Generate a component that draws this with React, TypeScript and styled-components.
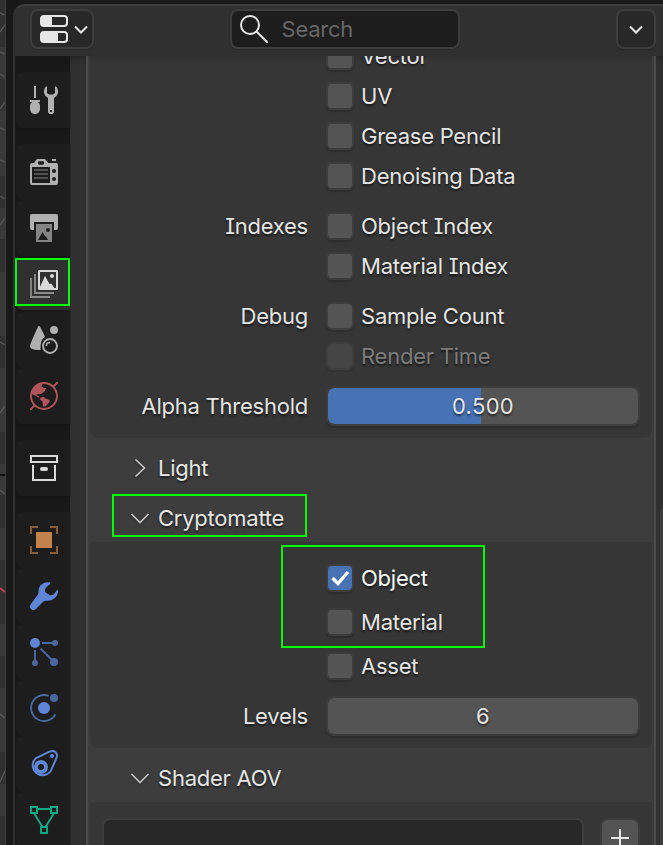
import React from "react";
import styled, { createGlobalStyle, css } from "styled-components";

const GlobalStyle = createGlobalStyle`
  * { box-sizing: border-box; }
  html, body { margin: 0; padding: 0; background: #181818; overflow: hidden; }
`;

const Screen = styled.div`
  position: relative;
  display: flex;
  width: 663px;
  height: 845px;
  overflow: hidden;
  background: #181818;
  color: #e6e6e6;
  font-family: Inter, "Liberation Sans", sans-serif;
  font-size: 22px;
  line-height: 30px;
  letter-spacing: -0.24px;
  font-feature-settings: "cv08" 1;
  text-shadow: 0 2px 2px rgba(0, 0, 0, 0.55);
`;

const Viewport = styled.div`
  flex: none;
  width: 6px;
  height: 845px;
  background: #303030;
  border-right: 1px solid #3c3c3c;
  svg { display: block; }
`;

const Editor = styled.div`
  flex: none;
  display: flex;
  flex-direction: column;
  width: 660px;
  height: 850px;
  margin: 4px 0 0 7px;
  border: 2px solid #3d3d3d;
  border-left-color: #303030;
  border-radius: 12px 0 0 0;
  overflow: hidden;
  background: #303030;
`;

const Header = styled.header`
  flex: none;
  display: flex;
  align-items: flex-start;
  justify-content: space-between;
  width: 641px;
  height: 50px;
  padding: 3px 0 0 15px;
`;

const control = css`
  display: flex;
  align-items: center;
  height: 40px;
  border: 2px solid #3d3d3d;
  border-radius: 8px;
  box-shadow: 0 1px 1px rgba(0, 0, 0, 0.2);
`;

const EditorType = styled.div`
  ${control}
  width: 64px;
  padding-left: 8px;
  gap: 6px;
  background: #282828;
`;

const SearchField = styled.div`
  ${control}
  width: 230px;
  margin-left: -42px;
  margin-right: -21px;
  padding-left: 8px;
  gap: 14px;
  background: #1d1d1d;
  color: #666;
  text-shadow: none;
`;

const OptionsButton = styled.div`
  ${control}
  width: 40px;
  justify-content: center;
  background: #282828;
`;

const Main = styled.div`
  flex: 1;
  display: flex;
  min-height: 0;
`;

const Tabs = styled.nav`
  flex: none;
  width: 55px;
  padding: 16px 0 0 1px;
  background: #181818;
`;

const TabGroup = styled.div`
  margin-bottom: 16px;
  box-shadow: 0 1px 1px #141414;
`;

const Tab = styled.div<{ $active?: boolean }>`
  display: flex;
  align-items: center;
  justify-content: center;
  height: 56px;
  padding-left: 2px;
  border: solid transparent;
  border-width: ${(p) => (p.$active ? "2px 0" : "0")};
  border-radius: 8px 0 0 8px;
  background: ${(p) => (p.$active ? "#303030" : "#1d1d1d")};
  background-clip: padding-box;
`;

const Region = styled.main`
  flex: none;
  width: 593px;
  padding-left: 16px;
  box-shadow: inset 0 6px 6px -4px rgba(0, 0, 0, 0.3);
`;

const Panel = styled.section`
  width: 570px;
  height: 100%;
  border: solid #4b4b4b;
  border-width: 0 2px;
  padding: 0 2px;
  background: #3d3d3d;
`;

const SubBody = styled.div<{ $height: number; $first?: boolean }>`
  position: relative;
  height: ${(p) => p.$height}px;
  overflow: hidden;
  border-radius: 0 0 8px 8px;
  background: ${(p) =>
    p.$first ? "linear-gradient(#303030, #363636 7px)" : "#363636"};
`;

const Rows = styled.div<{ $top: number }>`
  display: flex;
  flex-direction: column;
  margin-top: ${(p) => p.$top}px;
`;

const Row = styled.div<{ $height?: number; $gap?: number; $muted?: boolean; $bright?: boolean }>`
  display: flex;
  align-items: center;
  height: ${(p) => p.$height ?? 40}px;
  margin-top: ${(p) => p.$gap ?? 0}px;
  color: ${(p) => (p.$muted ? "#7c7c7c" : p.$bright ? "#fff" : "#e6e6e6")};
`;

const Label = styled.span`
  flex: none;
  width: 218px;
  margin-right: 18px;
  text-align: right;
  white-space: nowrap;
`;

const Box = styled.span<{ $on?: boolean; $muted?: boolean }>`
  flex: none;
  display: flex;
  align-items: center;
  justify-content: center;
  width: 28px;
  height: 28px;
  margin-right: 7px;
  border: 2px solid #3d3d3d;
  border-radius: 6px;
  background: ${(p) => (p.$on ? "#4772b3" : p.$muted ? "#454545" : "#545454")};
  box-shadow: 0 2px 1px ${(p) => (p.$muted ? "#323232" : "#2e2e2e")};
`;

const NumberField = styled.div<{ $fill?: number }>`
  flex: none;
  width: 314px;
  height: 40px;
  border: 2px solid #3d3d3d;
  border-radius: 8px;
  background: ${(p) =>
    p.$fill ? `linear-gradient(90deg, #4772b3 ${p.$fill}%, #545454 ${p.$fill}%)` : "#545454"};
  background-clip: padding-box;
  box-shadow: 0 2px 1px #2e2e2e;
  text-align: center;
  letter-spacing: 0.35px;
  line-height: 37px;
`;

const SubHeader = styled.div<{ $height: number; $top: number }>`
  display: flex;
  align-items: center;
  gap: 10px;
  height: ${(p) => p.$height}px;
  padding: ${(p) => p.$top}px 0 0 40px;
  svg { filter: drop-shadow(0 1px 1px rgba(0, 0, 0, 0.4)); }
`;

const AovBody = styled.div`
  display: flex;
  height: 60px;
  padding: 16px 0 0 12px;
  gap: 16px;
  background: #363636;
`;

const AovList = styled.div`
  width: 482px;
  height: 60px;
  border: 2px solid #3d3d3d;
  border-radius: 8px;
  background: #282828;
`;

const AddButton = styled.div`
  display: flex;
  align-items: center;
  justify-content: center;
  width: 40px;
  height: 40px;
  border: 2px solid #3d3d3d;
  border-radius: 8px;
  background: #545454;
`;

const Scrollbar = styled.div`
  position: absolute;
  left: 660px;
  top: 508px;
  width: 6px;
  height: 340px;
  border-radius: 4px 0 0 0;
  background: #3d3d3d;
`;

const Highlight = styled.div<{ $x: number; $y: number; $w: number; $h: number }>`
  position: absolute;
  left: ${(p) => p.$x}px;
  top: ${(p) => p.$y}px;
  width: ${(p) => p.$w}px;
  height: ${(p) => p.$h}px;
  border: 2px solid #00ff00;
`;

const Icon = ({ children }: { children: React.ReactNode }) => (
  <svg width="28" height="28" viewBox="0 0 28 28" fill="none">
    {children}
  </svg>
);

const G = "#b0b0b0";
const D = "#1d1d1d";
const B = "#5f86d6";
const BD = "#4a679f";

const ToolIcon = () => (
  <Icon>
    <path d="M4 0h2v12H4z" fill={G} />
    <path d="M0 14h10v2H8q2 1.500 2 4v3.500Q9 28 5 28t-5-4.500V20q0-2.500 2-4H0z" fill={G} />
    <path fillRule="evenodd" fill={G} d="M17 0v7l2 1.500h4L25 7V0l2 1.500 1 3V7l-1.500 3L24 12v14.500L22.500 28h-3L18 26.500V12l-2.500-2L14 7V4.500l1-3zM20 24v2h2v-2z" />
  </Icon>
);
const RenderIcon = () => (
  <Icon>
    <path fillRule="evenodd" fill={G} d="M2 5h2l2-3q.6-1 2-1h6q1.400 0 2 1l2 3h8q2 0 2 2v18q0 2-2 2H2q-2 0-2-2V7q0-2 2-2zM9 3.200q-1 0-1 1v1.600q0 1 1 1h4q1 0 1-1V4.200q0-1-1-1z" />
    <path fill={G} d="M22 1h4v2h-4z" />
    <path fill={D} d="M2 9h18v16H2z" />
    <path d="M4 12h14M4 16h14M4 20h14" stroke="#505050" strokeWidth="2" />
    <circle cx="24" cy="13" r="2" fill={D} />
    <circle cx="24" cy="21" r="2" fill={D} />
  </Icon>
);
const OutputIcon = () => (
  <Icon>
    <path fill={G} d="M0 2q0-2 2-2h24q2 0 2 2v12q0 2-2 2h-2V8H4v8H2q-2 0-2-2z" />
    <path fill="#858585" d="M6 10h16v18H6z" />
    <path fill={D} d="M8 26l4.500-8 2.500 4 1.500 1.200L18 26z" />
    <circle cx="18" cy="16" r="2" fill={D} />
  </Icon>
);
const ViewLayerIcon = () => (
  <Icon>
    <rect x="9" y="1" width="18" height="18" rx=".6" stroke="#d8d8d8" strokeWidth="2" />
    <path fill="#d8d8d8" d="M9 19l6-13 4.500 8 1.800-.6L25 19z" />
    <circle cx="22" cy="6" r="2" fill="#d8d8d8" />
    <path d="M5 4v19h19M1 8v19h19" stroke="#8c8c8c" strokeWidth="1.800" />
  </Icon>
);
const SceneIcon = () => (
  <Icon>
    <path fill={G} d="M9 0q.8 0 1.200.9L15 10.500q-5 3.500-4.500 13.400Q0 24.500 0 20 0 18 8 .8 8.300 0 9 0z" />
    <circle cx="24" cy="4" r="4" fill={G} />
    <circle cx="20" cy="20" r="7" stroke={G} strokeWidth="1.900" />
    <path d="M16.400 20q0-3.600 3.600-3.600" stroke={G} strokeWidth="1.500" />
  </Icon>
);
const WorldIcon = () => (
  <Icon>
    <g stroke="#b0565b" strokeWidth="1.900">
      <circle cx="14" cy="14" r="13" />
      <path d="M23 5l5-5M0 28l5-5" />
    </g>
    <path fill="#b0565b" d="M3 7l5-5h4.500l-1 2.500 2.500 1.500h2L15 9l-4 3H8.500L6 13l3 1.500V16l-3-2-4.500-2zM10.500 15.500l3-.7 2 1.600 4.200 1.600-.5 2.600-4 4H13l-.6-5.200-2.400-2z" />
  </Icon>
);
const CollectionIcon = () => (
  <Icon>
    <path d="M1 2h26v6H1zM3 11v15h22V11" stroke="#dadada" strokeWidth="2" />
    <rect x="10" y="13" width="8" height="4" rx="2" fill="#dadada" />
  </Icon>
);
const ObjectIcon = () => (
  <Icon>
    <path d="M1 8V1h7M20 1h7v7M27 20v7h-7M8 27H1v-7" stroke="#875a38" strokeWidth="2" />
    <rect x="6" y="6" width="16" height="16" rx=".6" fill="#c2824d" />
  </Icon>
);
const ModifierIcon = () => (
  <Icon>
    <path fill={B} d="M20 .5C14-.8 8.500 3 8.500 9.500c0 2-.4 3-1.500 4.200L.9 22C-.8 24.200 0 26.500 1.500 27.500s3.300.7 4.700-.7l7-7c1-.8 2-1 3.800-1 6.500 0 11.500-4.500 11-10.400L27 8l-2.600 3.800c-1.300 1.700-3.500 1.900-5.200 1l-2.500-1.500c-1.900-1.200-2.300-3-1.200-4.700L17 4.500l3-2.200z" />
  </Icon>
);
const ParticlesIcon = () => (
  <Icon>
    <path d="M12 5h12M5 12v12M10.500 10.500L23 23" stroke={BD} strokeWidth="1.900" />
    <circle cx="5" cy="5" r="5" fill={B} />
    <circle cx="25" cy="5" r="3" fill={BD} />
    <circle cx="5" cy="25" r="3" fill={BD} />
    <circle cx="24" cy="24" r="4" fill={BD} />
  </Icon>
);
const PhysicsIcon = () => (
  <Icon>
    <path d="M18.500 1.800A13 13 0 1 0 25.500 20.200" stroke={BD} strokeWidth="1.900" />
    <circle cx="14" cy="14" r="6" fill={B} />
    <circle cx="24" cy="4" r="4" fill={BD} />
  </Icon>
);
const ConstraintIcon = () => (
  <Icon>
    <path d="M5.500 8.300L20 1.500c4.500-1.600 8 1.500 6.700 6L20.500 21.500A10 10 0 1 1 5.500 8.300z" stroke={B} strokeWidth="1.900" />
    <circle cx="11" cy="17" r="5" stroke={B} strokeWidth="4" />
    <circle cx="22" cy="6" r="2" fill={B} />
  </Icon>
);
const MeshIcon = () => (
  <Icon>
    <path d="M8 3h12M4.500 8l8 13M23.500 8l-8 13M1 1h6v6H1zM21 1h6v6h-6zM11 21h6v6h-6z" stroke="#11a985" strokeWidth="1.900" />
  </Icon>
);

const Chevron = () => (
  <svg width="14" height="9" viewBox="0 0 14 9" fill="none">
    <path d="M1 1.500l6 6 6-6" stroke="#e6e6e6" strokeWidth="2" />
  </svg>
);
const Disclosure = ({ open }: { open?: boolean }) => (
  <svg width="18" height="18" viewBox="0 0 18 18" fill="none" overflow="visible">
    <path d={open ? "M1.500 5L10 13.500 18.500 5" : "M5.500 .5L14.500 9l-9 8.500"} stroke="#c4c4c4" strokeWidth="1.700" />
  </svg>
);

type CheckProps = {
  text: string;
  label?: string;
  on?: boolean;
  muted?: boolean;
  height?: number;
  gap?: number;
};
const CheckRow = ({ text, label, on, muted, height, gap }: CheckProps) => (
  <Row $height={height} $gap={gap} $muted={muted} $bright={on}>
    <Label>{label}</Label>
    <Box $on={on} $muted={muted}>
      {on && (
        <svg width="20" height="18" viewBox="0 0 20 18" fill="none">
          <path d="M2.500 9L8 14.500 18 3" stroke="#fff" strokeWidth="3.400" />
        </svg>
      )}
    </Box>
    <span>{text}</span>
  </Row>
);

const tabGroups = [
  [ToolIcon],
  [RenderIcon, OutputIcon, ViewLayerIcon, SceneIcon, WorldIcon],
  [CollectionIcon],
  [ObjectIcon, ModifierIcon, ParticlesIcon, PhysicsIcon, ConstraintIcon, MeshIcon],
];

export default function App() {
  return (
    <>
      <GlobalStyle />
      <Screen>
        <Viewport>
          <svg width="5" height="845" fill="none">
            <path fill="#393939" d="M0 47h5v32H0zM0 111h5v65H0zM0 208h5v31H0zM0 272h5v64H0zM0 368h5v64H0zM0 464h5v31H0zM0 528h5v32H0zM0 624h5v32H0zM0 688h5v64H0zM0 784h5v32H0z" />
            <path stroke="#555" strokeWidth="1.400" d="M0 13l5 2M0 32l5-7M0 52l5 2M0 74l5 3M0 109l5-7M0 128l5 2M0 160l5 2M0 196l5 3M0 225l5-7M0 342l5 3M0 413l5-7M0 490l5 4M0 714l5 4M0 782l5-11" />
            <path stroke="#000" strokeWidth="1.500" d="M0 475h5" />
            <path stroke="#bd3d55" strokeWidth="2" d="M0 588l5 4" />
          </svg>
        </Viewport>
        <Editor>
          <Header>
            <EditorType>
              <svg width="28" height="28" viewBox="0 0 28 28">
                <rect width="28" height="12" rx="4" fill="#e6e6e6" />
                <path d="M12 2h12q2 0 2 2v4q0 2-2 2H12z" fill="#282828" />
                <rect y="16" width="28" height="12" rx="4" fill="#e6e6e6" />
                <path d="M18 18h6q2 0 2 2v4q0 2-2 2h-6z" fill="#282828" />
              </svg>
              <Chevron />
            </EditorType>
            <SearchField>
              <svg width="28" height="28" viewBox="0 0 28 28" fill="none" stroke="#e6e6e6" strokeWidth="2">
                <circle cx="10" cy="10" r="9" />
                <path d="M16.500 16.500L28 28" />
              </svg>
              Search
            </SearchField>
            <OptionsButton>
              <Chevron />
            </OptionsButton>
          </Header>
          <Main>
            <Tabs>
              {tabGroups.map((group, g) => (
                <TabGroup key={g}>
                  {group.map((TabIcon, i) => (
                    <Tab key={i} $active={TabIcon === ViewLayerIcon}>
                      <TabIcon />
                    </Tab>
                  ))}
                </TabGroup>
              ))}
            </Tabs>
            <Region>
              <Panel>
                <SubBody $height={382} $first>
                  <Rows $top={-20}>
                    <CheckRow text="Vector" />
                    <CheckRow text="UV" />
                    <CheckRow text="Grease Pencil" />
                    <CheckRow text="Denoising Data" />
                    <CheckRow label="Indexes" text="Object Index" gap={10} />
                    <CheckRow text="Material Index" />
                    <CheckRow label="Debug" text="Sample Count" gap={10} />
                    <CheckRow text="Render Time" muted />
                    <Row $gap={10}>
                      <Label>Alpha Threshold</Label>
                      <NumberField $fill={49.4}>0.500</NumberField>
                    </Row>
                  </Rows>
                </SubBody>
                <SubHeader $height={50} $top={10}>
                  <Disclosure />
                  Light
                </SubHeader>
                <SubHeader $height={54} $top={6}>
                  <Disclosure open />
                  Cryptomatte
                </SubHeader>
                <SubBody $height={206}>
                  <Rows $top={14}>
                    <CheckRow text="Object" on height={44} />
                    <CheckRow text="Material" height={44} />
                    <CheckRow text="Asset" height={44} />
                    <Row $gap={8}>
                      <Label>Levels</Label>
                      <NumberField>6</NumberField>
                    </Row>
                  </Rows>
                </SubBody>
                <SubHeader $height={54} $top={6}>
                  <Disclosure open />
                  Shader AOV
                </SubHeader>
                <AovBody>
                  <AovList />
                  <AddButton>
                    <svg width="18" height="18" viewBox="0 0 18 18">
                      <path d="M9 0v18M0 9h18" stroke="#e6e6e6" strokeWidth="2" />
                    </svg>
                  </AddButton>
                </AovBody>
              </Panel>
            </Region>
          </Main>
        </Editor>
        <Scrollbar />
        <Highlight $x={15} $y={258} $w={55} $h={48} />
        <Highlight $x={112} $y={494} $w={195} $h={43} />
        <Highlight $x={281} $y={545} $w={204} $h={103} />
      </Screen>
    </>
  );
}
